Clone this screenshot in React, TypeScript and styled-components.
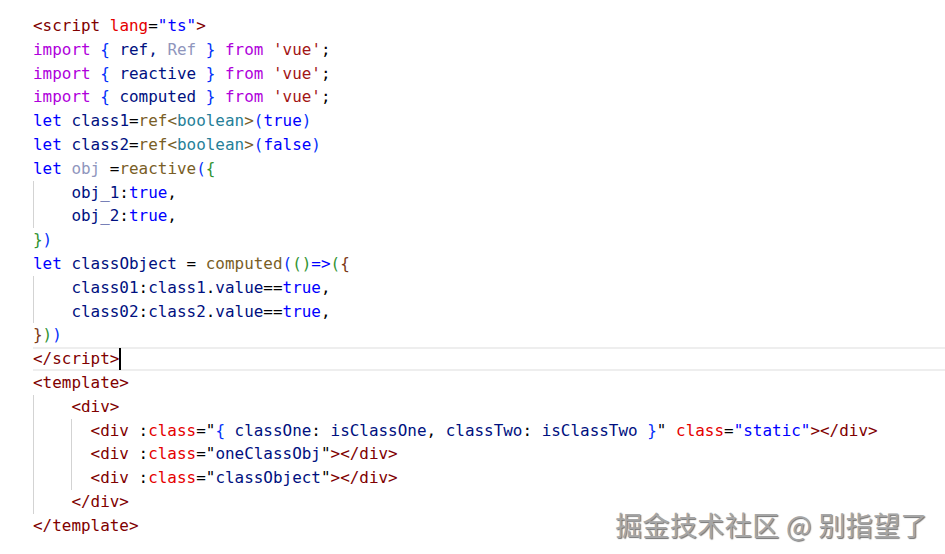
import React from "react";
import styled, { createGlobalStyle } from "styled-components";

const Global = createGlobalStyle`
  html, body { margin: 0; padding: 0; background: #ffffff; }
  #root { width: 945px; height: 554px; }
`;

const palette: Record<string, string> = {
  t: "#800000", // tag
  a: "#e50000", // attribute
  s: "#0000ff", // attr value / keyword blue
  k: "#af00db", // control keyword
  v: "#001080", // variable
  f: "#795e26", // function
  y: "#267f99", // type
  q: "#a31515", // string
  b1: "#0431fa",
  b2: "#319331",
  b3: "#7b3814",
  u: "#9096bd", // unused
  d: "#000000",
};

const Editor = styled.div`
  position: relative;
  width: 945px;
  height: 554px;
  overflow: hidden;
  background: #ffffff;
  padding: 14px 0 0 33px;
  box-sizing: border-box;
  font-family: "DejaVu Sans Mono", "Liberation Mono", monospace;
  font-size: 15.95px;
`;

const CodeLine = styled.div<{ $active?: boolean }>`
  height: 23.8px;
  line-height: 23.8px;
  white-space: pre;
  box-sizing: border-box;
  box-shadow: ${(p) =>
    p.$active ? "inset 0 2px 0 #eeeeee, inset 0 -2px 0 #eeeeee" : "none"};
`;

const Tok = styled.span<{ $c: string }>`
  color: ${(p) => palette[p.$c]};
`;

const Indent = styled.span<{ $w: number; $guide?: boolean }>`
  display: inline-block;
  width: ${(p) => p.$w}ch;
  height: 23.8px;
  vertical-align: top;
  box-shadow: ${(p) => (p.$guide ? "inset 1px 0 0 #d3d3d3" : "none")};
`;

const Cursor = styled.span`
  display: inline-block;
  width: 2px;
  height: 22px;
  background: #000000;
  vertical-align: top;
  margin-top: 1px;
`;

const Watermark = styled.div`
  position: absolute;
  right: 17px;
  bottom: 12px;
  font-family: "Noto Sans CJK SC", "Noto Sans", sans-serif;
  font-size: 27px;
  line-height: 34px;
  color: #a6a6a6;
  letter-spacing: 0.4px;
  text-shadow: 1px 1px 1px rgba(0, 0, 0, 0.55), -1px -1px 0 rgba(255, 255, 255, 0.9);
`;

type T = [string, string];
type Line = { indent?: { w: number; guide?: boolean }[]; toks: T[]; active?: boolean; cursor?: boolean };

const lines: Line[] = [
  { toks: [["<script", "t"], [" ", "d"], ["lang", "a"], ["=", "d"], ['"ts"', "s"], [">", "t"]] },
  { toks: [["import", "k"], [" ", "d"], ["{", "b1"], [" ref, ", "v"], ["Ref", "u"], [" ", "d"], ["}", "b1"], [" ", "d"], ["from", "k"], [" ", "d"], ["'vue'", "q"], [";", "d"]] },
  { toks: [["import", "k"], [" ", "d"], ["{", "b1"], [" reactive ", "v"], ["}", "b1"], [" ", "d"], ["from", "k"], [" ", "d"], ["'vue'", "q"], [";", "d"]] },
  { toks: [["import", "k"], [" ", "d"], ["{", "b1"], [" computed ", "v"], ["}", "b1"], [" ", "d"], ["from", "k"], [" ", "d"], ["'vue'", "q"], [";", "d"]] },
  { toks: [["let", "s"], [" ", "d"], ["class1", "v"], ["=", "d"], ["ref<", "f"], ["boolean", "y"], [">", "f"], ["(", "b1"], ["true", "s"], [")", "b1"]] },
  { toks: [["let", "s"], [" ", "d"], ["class2", "v"], ["=", "d"], ["ref<", "f"], ["boolean", "y"], [">", "f"], ["(", "b1"], ["false", "s"], [")", "b1"]] },
  { toks: [["let", "s"], [" ", "d"], ["obj", "u"], [" =", "d"], ["reactive", "f"], ["(", "b1"], ["{", "b2"]] },
  { indent: [{ w: 4, guide: true }], toks: [["obj_1", "v"], [":", "d"], ["true", "s"], [",", "d"]] },
  { indent: [{ w: 4, guide: true }], toks: [["obj_2", "v"], [":", "d"], ["true", "s"], [",", "d"]] },
  { toks: [["}", "b2"], [")", "b1"]] },
  { toks: [["let", "s"], [" ", "d"], ["classObject", "v"], [" = ", "d"], ["computed", "f"], ["(", "b1"], ["()", "b2"], ["=>", "s"], ["(", "b2"], ["{", "b3"]] },
  { indent: [{ w: 4, guide: true }], toks: [["class01", "v"], [":", "d"], ["class1", "v"], [".", "d"], ["value", "v"], ["==", "d"], ["true", "s"], [",", "d"]] },
  { indent: [{ w: 4, guide: true }], toks: [["class02", "v"], [":", "d"], ["class2", "v"], [".", "d"], ["value", "v"], ["==", "d"], ["true", "s"], [",", "d"]] },
  { toks: [["}", "b3"], [")", "b2"], [")", "b1"]] },
  { toks: [["</script>", "t"]], active: true, cursor: true },
  { toks: [["<template>", "t"]] },
  { indent: [{ w: 4, guide: true }], toks: [["<div>", "t"]] },
  {
    indent: [{ w: 4, guide: true }, { w: 2, guide: true }],
    toks: [["<div", "t"], [" ", "d"], [":", "d"], ["class", "a"], ["=", "d"], ['"', "d"], ["{", "b1"], [" classOne", "v"], [": ", "d"], ["isClassOne", "v"], [", ", "d"], ["classTwo", "v"], [": ", "d"], ["isClassTwo ", "v"], ["}", "b1"], ['"', "d"], [" ", "d"], ["class", "a"], ["=", "d"], ['"static"', "s"], ["></div>", "t"]],
  },
  {
    indent: [{ w: 4, guide: true }, { w: 2, guide: true }],
    toks: [["<div", "t"], [" ", "d"], [":", "d"], ["class", "a"], ["=", "d"], ['"', "d"], ["oneClassObj", "v"], ['"', "d"], ["></div>", "t"]],
  },
  {
    indent: [{ w: 4, guide: true }, { w: 2, guide: true }],
    toks: [["<div", "t"], [" ", "d"], [":", "d"], ["class", "a"], ["=", "d"], ['"', "d"], ["classObject", "v"], ['"', "d"], ["></div>", "t"]],
  },
  { indent: [{ w: 4, guide: true }], toks: [["</div>", "t"]] },
  { toks: [["</template>", "t"]] },
];

export default function App() {
  return (
    <>
      <Global />
      <Editor>
        {lines.map((ln, i) => (
          <CodeLine key={i} $active={ln.active}>
            {ln.indent?.map((ind, j) => (
              <Indent key={j} $w={ind.w} $guide={ind.guide} />
            ))}
            {ln.toks.map(([text, c], j) => (
              <Tok key={j} $c={c}>
                {text}
              </Tok>
            ))}
            {ln.cursor && <Cursor />}
          </CodeLine>
        ))}
        <Watermark>掘金技术社区 @ 别指望了</Watermark>
      </Editor>
    </>
  );
}
